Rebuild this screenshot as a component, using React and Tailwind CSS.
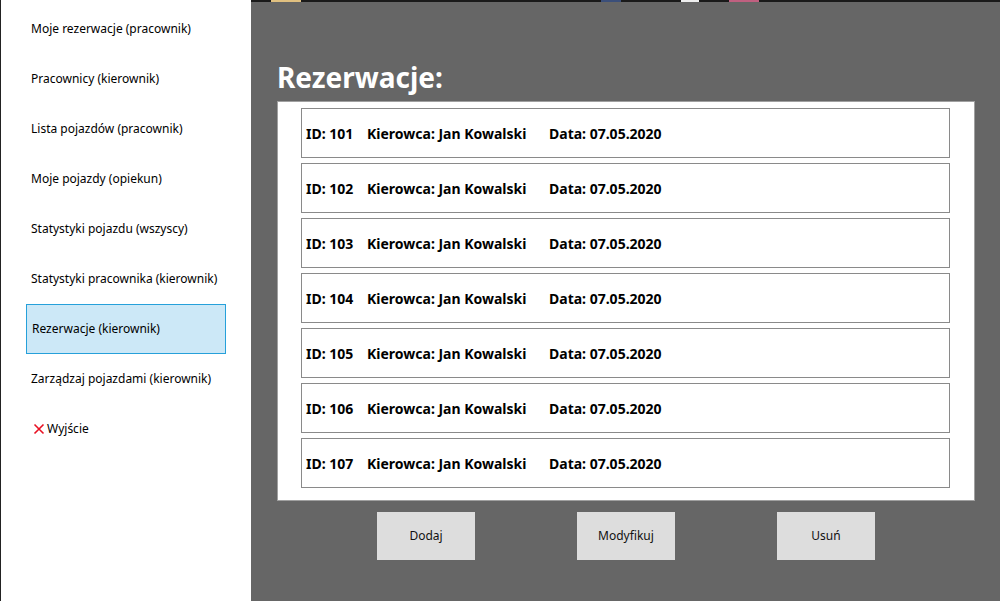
import React from 'react';

const menu = [
  'Moje rezerwacje (pracownik)',
  'Pracownicy (kierownik)',
  'Lista pojazdów (pracownik)',
  'Moje pojazdy (opiekun)',
  'Statystyki pojazdu (wszyscy)',
  'Statystyki pracownika (kierownik)',
  'Rezerwacje (kierownik)',
  'Zarządzaj pojazdami (kierownik)',
];

const rows = [101, 102, 103, 104, 105, 106, 107];

const App = () => {
  return (
    <div className="flex w-[1000px] h-[601px] overflow-hidden" style={{ fontFamily: '"Noto Sans", "Open Sans", sans-serif' }}>
      {/* Sidebar */}
      <aside className="w-[251px] shrink-0 bg-white border-l border-[#222] pt-[4px]">
        <ul className="pl-[25px] w-[225px]">
          {menu.map((m, i) => (
            <li
              key={m}
              className={
                'h-[50px] flex items-center pl-[5px] text-[12px] text-black ' +
                (i === 6 ? 'bg-[#cce8f7] border border-[#26a0da] pl-[4px]' : '')
              }
            >
              {m}
            </li>
          ))}
          <li className="h-[50px] flex items-center pl-[7px] text-[12px] text-black gap-[2px]">
            <svg width="12" height="12" viewBox="0 0 12 12">
              <path d="M1.5 1.5 L10.5 10.5 M10.5 1.5 L1.5 10.5" stroke="#e81123" strokeWidth="1.6" />
            </svg>
            Wyjście
          </li>
        </ul>
      </aside>

      {/* Main */}
      <main className="flex-1 bg-[#666666] flex flex-col">
        <div className="h-[2px] bg-[#1a1a1a] flex">
          <span className="w-[30px] ml-[20px] bg-[#e0c080]" />
          <span className="w-[20px] ml-[300px] bg-[#3b4f7a]" />
          <span className="w-[18px] ml-[60px] bg-[#eeeeee]" />
          <span className="w-[30px] ml-[30px] bg-[#c06080]" />
        </div>
        <div className="pl-[26px] pr-[25px] pt-[58px]">
          <h1 className="text-white font-bold text-[28px] leading-[34px] h-[41px]">Rezerwacje:</h1>
          <div className="bg-white border border-[#a0a0a0] h-[400px] pl-[23px] pr-[24px] pt-[6px] flex flex-col gap-[5px]">
            {rows.map((id) => (
              <div
                key={id}
                className="h-[50px] border border-[#8a8a8a] flex items-center pl-[4px] text-[14px] font-bold text-black"
              >
                <span className="w-[61px]">ID: {id}</span>
                <span className="w-[182px]">Kierowca: Jan Kowalski</span>
                <span>Data: 07.05.2020</span>
              </div>
            ))}
          </div>
          <div className="flex pl-[100px] gap-[102px] mt-[11px]">
            {['Dodaj', 'Modyfikuj', 'Usuń'].map((b) => (
              <button
                key={b}
                className="w-[98px] h-[48px] bg-[#dddddd] text-[12px] text-[#111]"
              >
                {b}
              </button>
            ))}
          </div>
        </div>
      </main>
    </div>
  );
};

export default App;
